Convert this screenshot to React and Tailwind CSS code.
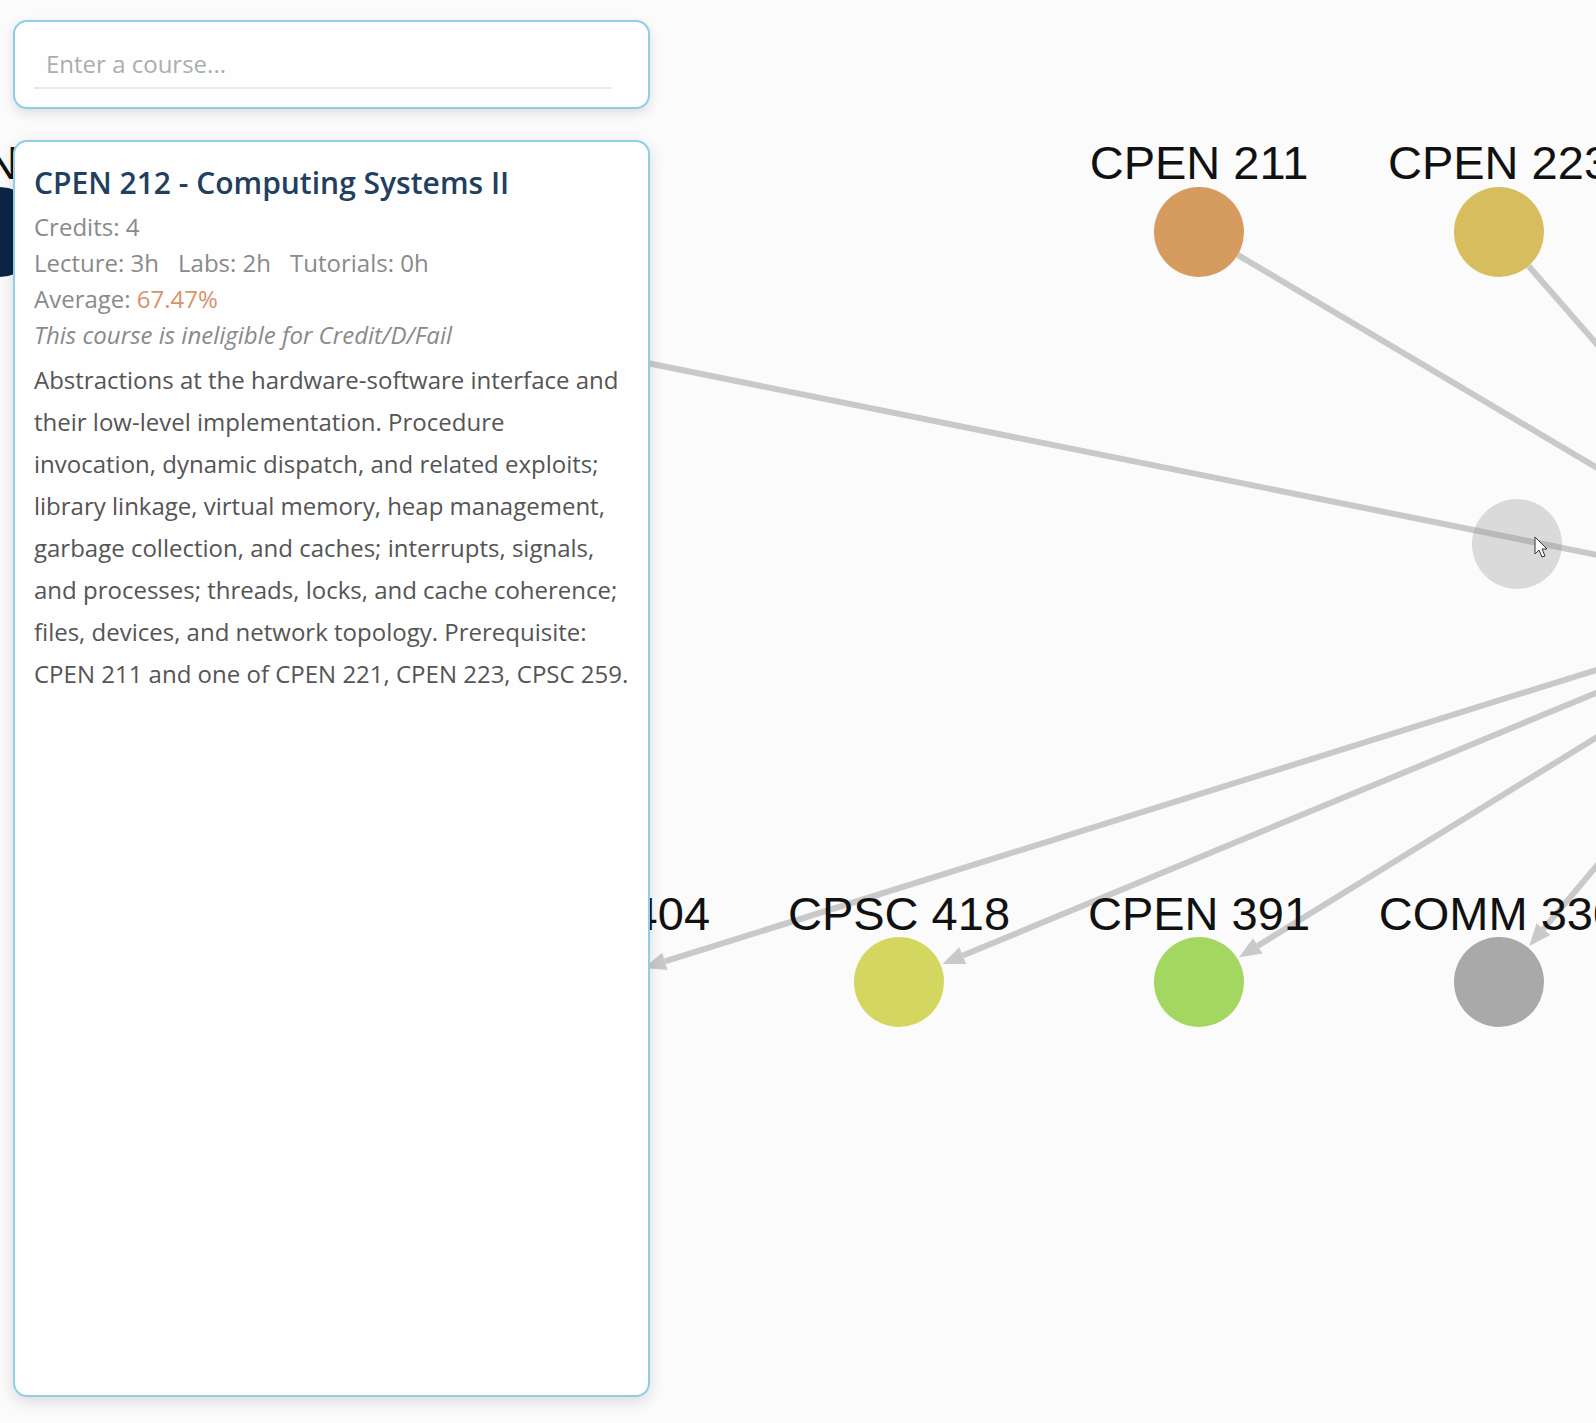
import React from 'react';

const CENTER = { x: 1820, y: 600 };
const R = 45;

const nodes = [
  { id: 'CPEN 221', x: -1, y: 232, fill: '#0c2446' },
  { id: 'CPEN 211', x: 1199, y: 232, fill: '#d69b5e' },
  { id: 'CPEN 223', x: 1499, y: 232, fill: '#d8bd5e' },
  { id: '', x: 1517, y: 544, fill: '#dadada' },
  { id: 'CPSC 404', x: 599, y: 982, fill: '#c9c9c9' },
  { id: 'CPSC 418', x: 899, y: 982, fill: '#d3d75f' },
  { id: 'CPEN 391', x: 1199, y: 982, fill: '#a4d762' },
  { id: 'COMM 330', x: 1499, y: 982, fill: '#a9a9a9' },
];

// prereqs point into the centre node, the rest come out of it
const incoming = ['CPEN 221', 'CPEN 211', 'CPEN 223'];
const outgoing = ['CPSC 404', 'CPSC 418', 'CPEN 391', 'COMM 330'];

const edge = (from, to, key) => {
  const dx = to.x - from.x;
  const dy = to.y - from.y;
  const len = Math.hypot(dx, dy);
  const ux = dx / len;
  const uy = dy / len;
  const sx = from.x + ux * R;
  const sy = from.y + uy * R;
  const tx = to.x - ux * (R + 2);
  const ty = to.y - uy * (R + 2);
  const bx = tx - ux * 22;
  const by = ty - uy * 22;
  const px = -uy * 9;
  const py = ux * 9;
  return (
    <g key={key}>
      <line x1={sx} y1={sy} x2={bx} y2={by} stroke="#999" strokeWidth="6" />
      <polygon points={`${tx},${ty} ${bx + px},${by + py} ${bx - px},${by - py}`} fill="#999" />
    </g>
  );
};

const Graph = () => {
  const byId = (id) => nodes.find((n) => n.id === id);
  return (
    <svg className="absolute inset-0" width="1596" height="1423">
      {nodes.map((n, i) => (
        <circle key={i} cx={n.x} cy={n.y} r={R} fill={n.fill} />
      ))}
      <g opacity="0.5">
        {incoming.map((id) => edge(byId(id), CENTER, 'in-' + id))}
        {outgoing.map((id) => edge(CENTER, byId(id), 'out-' + id))}
      </g>
      {nodes.filter((n) => n.id).map((n) => (
        <text
          key={n.id}
          x={n.x}
          y={n.y - (n.y < 500 ? 53 : 52)}
          textAnchor="middle"
          fontFamily="'Liberation Sans', Arial, sans-serif"
          fontSize="47"
          fill="#111"
        >
          {n.id}
        </text>
      ))}
      {/* mouse pointer */}
      <path
        d="M1535 537 L1535 554 L1539 550 L1542 557 L1545 556 L1542 549 L1547 549 Z"
        fill="#fff"
        stroke="#333"
        strokeWidth="1"
        strokeLinejoin="round"
      />
    </svg>
  );
};

export default function App() {
  return (
    <div className="relative w-full h-[1423px] overflow-hidden bg-[#fbfbfb]">
      <Graph />

      <div className="relative flex flex-col gap-[31px] pl-[13px] pt-[20px] w-[650px] font-['Open_Sans',sans-serif]">
        <div className="h-[89px] bg-[#fdfefd] border-2 border-[#8fcfe6] rounded-[14px] shadow-[0_4px_12px_rgba(0,0,0,0.12)] pl-[19px] pt-[19px]">
          <input
            type="text"
            placeholder="Enter a course..."
            className="w-[577px] pl-3 py-[5px] text-[24px] leading-[36px] text-[#333] placeholder:text-[#a9aeb3] bg-transparent border-b-2 border-[#e6e8ea] outline-none"
          />
        </div>

        <div className="h-[1257px] bg-[#fdfefd] border-2 border-[#8fcfe6] rounded-[14px] shadow-[0_5px_16px_rgba(0,0,0,0.13)] pt-[20px] pl-[19px] pr-[16px]">
          <h2 className="text-[30px] leading-[42px] font-semibold text-[#223f5e]">
            CPEN 212 - Computing Systems II
          </h2>
          <div className="mt-[5px] text-[24px] leading-[36px] text-[#8a8a8a]">
            <p>Credits: 4</p>
            <p className="flex gap-[19px]">
              <span>Lecture: 3h</span>
              <span>Labs: 2h</span>
              <span>Tutorials: 0h</span>
            </p>
            <p>
              Average: <span className="text-[#d6946c]">67.47%</span>
            </p>
            <p className="italic">This course is ineligible for Credit/D/Fail</p>
          </div>
          <p className="mt-[6px] w-[597px] text-[24px] leading-[42px] text-[#555]">
            Abstractions at the hardware-software interface and their low-level implementation. Procedure
            invocation, dynamic dispatch, and related exploits; library linkage, virtual memory, heap
            management, garbage collection, and caches; interrupts, signals, and processes; threads, locks,
            and cache coherence; files, devices, and network topology. Prerequisite: CPEN 211 and one of
            CPEN 221, CPEN 223, CPSC 259.
          </p>
        </div>
      </div>
    </div>
  );
}
